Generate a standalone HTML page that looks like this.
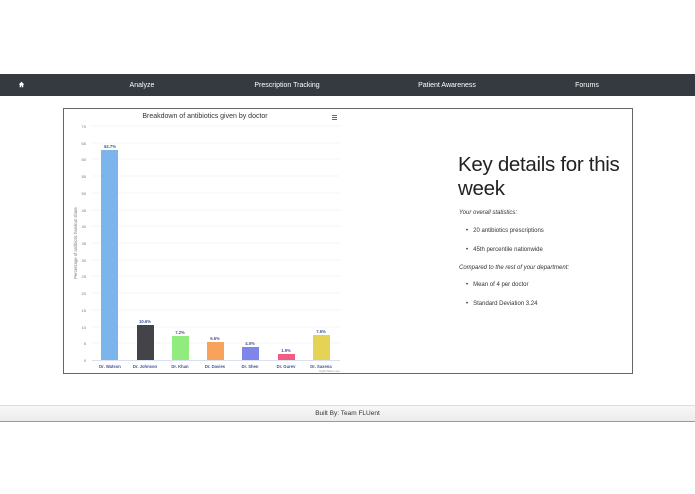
<!DOCTYPE html>
<html><head><style>
body{margin:0;width:695px;height:494px;background:#fff;font-family:"Liberation Sans",sans-serif;position:relative;overflow:hidden}
.nav{position:absolute;left:0;top:74px;width:695px;height:22px;background:#343a40;color:#fff;font-size:7px}
.nav span{position:absolute;top:7.5px;transform:translateX(-50%)}
.box{position:absolute;left:63px;top:108px;width:568px;height:264px;border:1px solid #666}
.foot{position:absolute;left:0;top:405px;width:695px;height:15px;background:linear-gradient(#f7f7f7,#ececec);border-top:1px solid #ddd;border-bottom:1px solid #999;font-size:6.5px;color:#333;text-align:center;line-height:15px}
h1{position:absolute;left:458px;top:153px;margin:0;font-weight:normal;font-size:20.5px;line-height:24px;color:#222;width:200px;letter-spacing:-0.3px}
.t{position:absolute;font-size:6px;color:#333}
.i{font-style:italic}
</style></head><body>
<div class="nav">
<svg style="position:absolute;left:18px;top:7px" width="7" height="7" viewBox="0 0 10 10"><path d="M5 1L1 5h1.5v4h2V6.5h1V9h2V5H9z" fill="#fff"/></svg>
<span style="left:142px">Analyze</span><span style="left:287px">Prescription Tracking</span><span style="left:447px">Patient Awareness</span><span style="left:587px">Forums</span>
</div>
<div class="box"></div>
<svg style="position:absolute;left:0;top:0" width="695" height="494" font-family="Liberation Sans, sans-serif">
<text x="205" y="118" font-size="7" text-anchor="middle" fill="#333">Breakdown of antibiotics given by doctor</text>
<g fill="#666"><rect x="332" y="115" width="5" height="1"/><rect x="332" y="117" width="5" height="1"/><rect x="332" y="119" width="5" height="1"/></g>
<g stroke="#eee" stroke-width="0.6">
<line x1="92" x2="340" y1="126" y2="126"/><line x1="92" x2="340" y1="143" y2="143"/><line x1="92" x2="340" y1="159" y2="159"/><line x1="92" x2="340" y1="176" y2="176"/><line x1="92" x2="340" y1="193" y2="193"/><line x1="92" x2="340" y1="210" y2="210"/><line x1="92" x2="340" y1="226" y2="226"/><line x1="92" x2="340" y1="243" y2="243"/><line x1="92" x2="340" y1="260" y2="260"/><line x1="92" x2="340" y1="276" y2="276"/><line x1="92" x2="340" y1="293" y2="293"/><line x1="92" x2="340" y1="310" y2="310"/><line x1="92" x2="340" y1="327" y2="327"/><line x1="92" x2="340" y1="343" y2="343"/></g>
<line x1="92" x2="340" y1="360.5" y2="360.5" stroke="#ccd6eb" stroke-width="0.8"/>
<g font-size="4" fill="#777" text-anchor="end">
<text x="86" y="128">70</text><text x="86" y="145">65</text><text x="86" y="161">60</text><text x="86" y="178">55</text><text x="86" y="195">50</text><text x="86" y="212">45</text><text x="86" y="228">40</text><text x="86" y="245">35</text><text x="86" y="262">30</text><text x="86" y="278">25</text><text x="86" y="295">20</text><text x="86" y="312">15</text><text x="86" y="329">10</text><text x="86" y="345">5</text><text x="86" y="362">0</text></g>
<text transform="translate(77,243) rotate(-90)" font-size="4.2" fill="#777" text-anchor="middle">Percentage of antibiotic handout share</text>
<rect x="101" y="150" width="17" height="210" fill="#7cb5ec"/>
<rect x="137" y="325" width="17" height="35" fill="#434348"/>
<rect x="172" y="336" width="17" height="24" fill="#90ed7d"/>
<rect x="207" y="342" width="17" height="18" fill="#f7a35c"/>
<rect x="242" y="347" width="17" height="13" fill="#8085e9"/>
<rect x="278" y="354" width="17" height="6" fill="#f15c80"/>
<rect x="313" y="335" width="17" height="25" fill="#e4d354"/>
<g font-size="4.2" font-weight="bold" fill="#445599" text-anchor="middle">
<text x="110" y="148">62.7%</text><text x="145" y="323">10.6%</text><text x="180" y="334">7.2%</text><text x="215" y="340">5.6%</text><text x="250" y="345">4.0%</text><text x="286" y="352">1.9%</text><text x="321" y="333">7.6%</text>
<text x="110" y="368">Dr. Watson</text><text x="145" y="368">Dr. Johnson</text><text x="180" y="368">Dr. Khan</text><text x="215" y="368">Dr. Davies</text><text x="250" y="368">Dr. Shen</text><text x="286" y="368">Dr. Gurev</text><text x="321" y="368">Dr. Saxena</text></g>
<text x="340" y="372" font-size="3" fill="#999" text-anchor="end">Highcharts.com</text>
</svg>
<h1>Key details for this week</h1>
<div class="t i" style="left:459px;top:210px">Your overall statistics:</div>
<div class="t" style="left:466px;top:228px">•&nbsp;&nbsp; 20 antibiotics prescriptions</div>
<div class="t" style="left:466px;top:247px">•&nbsp;&nbsp; 45th percentile nationwide</div>
<div class="t i" style="left:459px;top:265px">Compared to the rest of your department:</div>
<div class="t" style="left:466px;top:282px">•&nbsp;&nbsp; Mean of 4 per doctor</div>
<div class="t" style="left:466px;top:301px">•&nbsp;&nbsp; Standard Deviation 3.24</div>
<div class="foot">Built By: Team FLUent</div>
</body></html>
